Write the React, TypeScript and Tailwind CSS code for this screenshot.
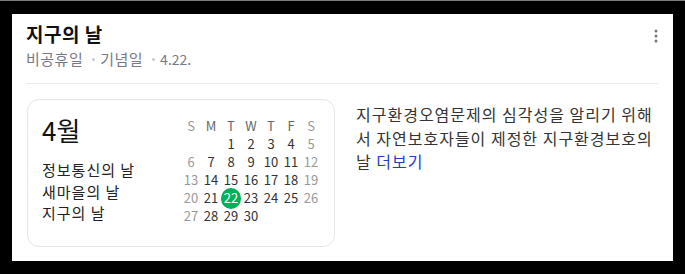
const font = { fontFamily: '"Noto Sans CJK KR", "Noto Sans", sans-serif' };

const weeks: (number | null)[][] = [
  [null, null, 1, 2, 3, 4, 5],
  [6, 7, 8, 9, 10, 11, 12],
  [13, 14, 15, 16, 17, 18, 19],
  [20, 21, 22, 23, 24, 25, 26],
  [27, 28, 29, 30, null, null, null],
];

const days = ["S", "M", "T", "W", "T", "F", "S"];

export default function App() {
  return (
    <div className="w-[685px] h-[274px] bg-black border-t border-[#7a7a7a] pt-[13px] pl-[12px]" style={font}>
      <div className="w-[661px] h-[247px] bg-white px-[14px] pt-[7px]">
        <div className="flex items-start justify-between">
          <div>
            <h1 className="text-[19px] leading-[26px] font-bold tracking-[0.5px] text-[#111]">지구의 날</h1>
            <div className="mt-[2px] flex items-center text-[15px] leading-[20px] tracking-[0.5px] text-[#767a85]">
              <span>비공휴일</span>
              <span className="ml-[9px] mr-[5px] w-[3px] h-[3px] rounded-full bg-[#c8ccd4]" />
              <span>기념일</span>
              <span className="ml-[9px] mr-[5px] w-[3px] h-[3px] rounded-full bg-[#c8ccd4]" />
              <span className="tracking-normal text-[14px]">4.22.</span>
            </div>
          </div>
          <svg width="4" height="14" viewBox="0 0 4 14" className="mt-[8px] mr-[1px]">
            <circle cx="2" cy="2" r="1.5" fill="#777" />
            <circle cx="2" cy="7" r="1.5" fill="#777" />
            <circle cx="2" cy="12" r="1.5" fill="#777" />
          </svg>
        </div>

        <div className="mt-[14px] h-px bg-[#ebebeb] mr-[1px]" />

        <div className="mt-[15px] flex">
          <div className="ml-[1px] w-[308px] h-[148px] rounded-[12px] border border-[#e6e6e6] flex justify-between pl-[14px] pr-[13px] pt-[14px]">
            <div>
              <div className="text-[26px] leading-[32px] text-[#111]">4월</div>
              <ul className="mt-[13px] text-[15px] leading-[21.5px] tracking-[1px] text-[#222]">
                <li>정보통신의 날</li>
                <li>새마을의 날</li>
                <li>지구의 날</li>
              </ul>
            </div>
            <div className="mt-[3px] w-[140px] text-[13px]">
              <div className="grid grid-cols-7 text-center leading-[18px]">
                {days.map((d, i) => (
                  <span key={i} className={i === 0 || i === 6 ? "text-[#999]" : "text-[#666]"}>{d}</span>
                ))}
              </div>
              {weeks.map((w, wi) => (
                <div key={wi} className="grid grid-cols-7 text-center leading-[18px]">
                  {w.map((n, i) => (
                    <span key={i} className="flex items-center justify-center h-[18px]">
                      {n === 22 ? (
                        <span className="w-[21px] h-[21px] rounded-full bg-[#03b05a] text-white flex items-center justify-center">22</span>
                      ) : (
                        <span className={i === 0 || i === 6 ? "text-[#999]" : "text-[#333]"}>{n ?? ""}</span>
                      )}
                    </span>
                  ))}
                </div>
              ))}
            </div>
          </div>

          <p className="ml-[21px] mt-[4px] w-[303px] text-[16px] leading-[23.5px] tracking-[1px] text-[#333]">
            지구환경오염문제의 심각성을 알리기 위해서 자연보호자들이 제정한 지구환경보호의 날 <a className="text-[#1f3cc4]">더보기</a>
          </p>
        </div>
      </div>
    </div>
  );
}
